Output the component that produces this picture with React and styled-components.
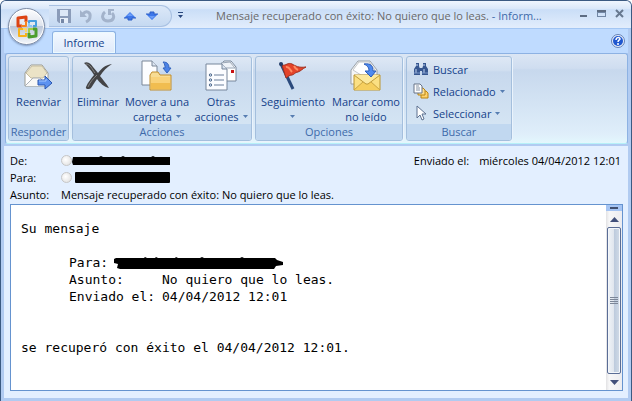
import React from "react";
import styled, { createGlobalStyle } from "styled-components";

const COLOR = {
  FRAME: "#3b5a82",
  SKY: "#bfdbff",
  PALE: "#e3efff",
  LINE: "#8db2e3",
  TEXT: "#15428b",
  LABEL: "#3e6aaa",
  FIELD: "#6593cf",
};

const SANS = '"Open Sans", "Noto Sans", sans-serif';
const MONO = '"DejaVu Sans Mono", "Liberation Mono", monospace';

const GlobalStyle = createGlobalStyle`
  * {
    box-sizing: border-box;
  }
  body {
    margin: 0;
    font-family: ${SANS};
    font-size: 11px;
    color: #000;
  }
  button {
    margin: 0;
    padding: 0;
    border: 0;
    background: none;
    font: inherit;
    color: inherit;
  }
  svg {
    display: block;
    flex: none;
  }
`;

/* ---------- icons ---------- */

const OfficeLogo = () => (
  <svg width="24" height="24" viewBox="0 0 24 24" fill="none" strokeLinejoin="round">
    <path d="M7 11H3V3l8-1v5" stroke="#dd4313" strokeWidth="3" />
    <path d="M11 6v5H6" stroke="#f5821f" strokeWidth="2" />
    <path d="M14 9V6h7v5h-3" stroke="#4a9fe0" strokeWidth="2" />
    <path d="M14 8v3h3" stroke="#8cc6f2" strokeWidth="2" />
    <path d="M8 14H4v7h7v-3" stroke="#f7b21b" strokeWidth="2" />
    <path d="M8 14h3v3" stroke="#fcd668" strokeWidth="2" />
    <path d="M18 14h3v7l-7 1v-4" stroke="#4c9e2f" strokeWidth="3" />
    <path d="M14 18v-4h4" stroke="#a3cd45" strokeWidth="2" />
  </svg>
);

const SaveIcon = () => (
  <svg width="16" height="16" viewBox="0 0 16 16">
    <path d="M1 1h14v14H3l-2-2z" fill="#8b9cb9" />
    <path d="M4 2h8v6H4z" fill="#dce7f6" />
    <path d="M4 10h8v5H4z" fill="#e6eef9" />
    <path d="M5 11h3v4H5z" fill="#7587a6" />
  </svg>
);

const UndoIcon = () => (
  <svg width="16" height="16" viewBox="0 0 16 16" fill="none">
    <path d="M5 6c3-4 8-2 7 3 0 3-2 4-4 5" stroke="#a3b3cb" strokeWidth="3" />
    <path d="M2 2v7h7z" fill="#a3b3cb" />
  </svg>
);

const RedoIcon = () => (
  <svg width="16" height="16" viewBox="0 0 16 16" fill="none">
    <path d="M5 4c-4 3-3 9 3 9s7-5 4-8" stroke="#a3b3cb" strokeWidth="3" />
    <path d="M8 1h6v2h-3v4H8z" fill="#a3b3cb" />
  </svg>
);

const NavArrow = ({ down }) => (
  <svg width="14" height="14" viewBox="0 0 14 14">
    <g transform={down ? "rotate(180 7 7)" : undefined}>
      <path d="M7 3l6 6H9v2H5V9H1z" fill="#3d77ea" />
      <path d="M1 9h4v2h4V9h4" fill="none" stroke="#2f5fc4" />
      <path d="M7 4l3 3H4z" fill="#6c9df8" />
    </g>
  </svg>
);

const MoreIcon = () => (
  <svg width="7" height="7" viewBox="0 0 7 7" fill="#28467c">
    <path d="M1 0h5v1H1zM1 3h5L3.500 6z" />
  </svg>
);

const HelpIcon = () => (
  <svg width="14" height="14" viewBox="0 0 14 14" fill="none">
    <circle cx="7" cy="7" r="6.500" fill="#e6eefb" stroke="#6580b4" />
    <circle cx="7" cy="7" r="5" fill="#1f57cf" />
    <path d="M5 6c0-3 4-3 4-1 0 1-2 1-2 3M7 9v2" stroke="#fff" strokeWidth="1.500" />
  </svg>
);

const ForwardIcon = () => (
  <svg width="32" height="32" viewBox="0 0 32 32">
    <path d="M2 14L8 6h11l6 8v13H2z" fill="#fff" stroke="#9c9c92" />
    <path d="M3 14l6-7h10l5 7-4 5H8z" fill="#ebe3c6" stroke="#c5bda0" />
    <path d="M2 27l8-8h7l8 8" fill="#f8f8f6" stroke="#aab0b8" />
    <path d="M15 21h7v-4l7 7-7 6v-4h-7z" fill="#5d92f0" stroke="#2b57b0" />
    <path d="M16 22h7v-2" fill="none" stroke="#a4c7ff" />
  </svg>
);

const DeleteIcon = () => (
  <svg width="32" height="32" viewBox="0 0 32 32">
    <path d="M2 4c4-2 7 1 9 4l5 6c4-5 7-8 14-9-5 3-9 7-12 12 3 4 6 7 9 12-5-1-9-5-12-9-3 4-4 6-6 9-2 2-6 1-5-1 2-5 5-8 8-12C9 11 6 8 2 4z" fill="#444446" />
    <path d="M4 5c4 0 6 5 9 9M6 28c2-5 5-8 9-12" fill="none" stroke="#858585" />
  </svg>
);

const MoveIcon = () => (
  <svg width="32" height="32" viewBox="0 0 32 32">
    <path d="M1 2h10l5 5v19H1z" fill="#fcfdff" stroke="#7b8798" />
    <path d="M11 2v5h5" fill="#dce5f1" stroke="#7b8798" />
    <path d="M9 16l2-3h6l2 3h11v15H9z" fill="#f8dc93" stroke="#c18d2c" />
    <path d="M10 18h19v12H10z" fill="#f9d27a" />
    <path d="M10 24h19v6H10z" fill="#f1bd50" />
    <path d="M22 3c5 0 6 3 6 6h2l-4 5-4-5h2c0-2 0-4-2-6z" fill="#4b82e6" stroke="#3264be" />
  </svg>
);

const OtherIcon = () => (
  <svg width="32" height="32" viewBox="0 0 32 32">
    <path d="M15 7l4-5h7l5 6v14H15z" fill="#fff" stroke="#77869b" />
    <path d="M16 4l5 5h9l-5-6z" fill="#eef2f8" stroke="#9aa6b6" />
    <path d="M26 11h3v3h-3z" fill="#c91313" />
    <path d="M1 5h16l5 5v21H1z" fill="#fbfcff" stroke="#77869b" />
    <path d="M17 5v5h5" fill="#dbe4f0" stroke="#77869b" />
    <path d="M9 16h10M9 21h10M9 26h10" stroke="#6b7f9b" />
    <g fill="#d6e6fb" stroke="#4c6586">
      <circle cx="5.500" cy="16" r="1.200" />
      <circle cx="5.500" cy="21" r="1.200" />
      <circle cx="5.500" cy="26" r="1.200" />
    </g>
  </svg>
);

const FlagIcon = () => (
  <svg width="32" height="32" viewBox="0 0 32 32">
    <path d="M4 5l12 25" stroke="#2b4a7c" strokeWidth="3" />
    <path d="M5 6c4 1 6-3 10-1s6 4 14 3c-4 2-5 4-8 5-3 0-4 3-6 3-3 0-4 2-6 3z" fill="#e4442a" stroke="#a3301e" />
    <path d="M9 8c3-1 4 3 6 5M17 7c1 2 2 3 4 4" fill="none" stroke="#ff8b61" strokeWidth="2" />
    <circle cx="4" cy="5" r="2" fill="#233d68" />
  </svg>
);

const UnreadIcon = () => (
  <svg width="32" height="32" viewBox="0 0 32 32">
    <path d="M1 11l7-9h12l7 9v14H1z" fill="#f5f6f6" stroke="#9aa1a8" />
    <path d="M3 11l6-8h10l6 8-8 5h-6z" fill="#fff" stroke="#c5c8ca" />
    <path d="M4 16h26v15H4z" fill="#fbe083" stroke="#bc9630" />
    <path d="M4 31l10-9h6l10 9" fill="#f6cf5e" stroke="#cba544" />
    <path d="M4 16l12 9h2l12-9" fill="#fce99e" stroke="#c09b38" />
    <path d="M14 5c7-1 9 2 9 7h3l-5 6-6-6h4c0-3-1-5-5-7z" fill="#4f8aef" stroke="#2a5cb8" />
  </svg>
);

const FindIcon = () => (
  <svg width="16" height="16" viewBox="0 0 16 16" fill="#36568f">
    <path d="M3 2h3v3l1 3v6H1V8l2-3zM10 2h3v3l2 3v6H9V8l1-3zM6 7h4v3H6z" />
    <path d="M4 3v2M3 8v4M11 3v2M11 8v4" stroke="#c2d5f3" />
    <path d="M1 12h6M9 12h6" stroke="#7a97c8" />
  </svg>
);

const RelatedIcon = () => (
  <svg width="16" height="16" viewBox="0 0 16 16">
    <path d="M8 8h5l2 2v5H8z" fill="#ffd26a" stroke="#b98413" />
    <path d="M5 5h5l2 2v5H5z" fill="#ffdf8e" stroke="#b98413" />
    <path d="M1 1h6l2 2v7H1z" fill="#fff" stroke="#667387" />
    <path d="M3 3h3M3 5h4M3 7h4" stroke="#8492a5" />
  </svg>
);

const PointerIcon = () => (
  <svg width="16" height="16" viewBox="0 0 16 16">
    <path d="M4 1v12l3-3 2 5 2-1-2-5h4z" fill="#fff" stroke="#5d7190" />
  </svg>
);

const Caret = () => (
  <svg width="5" height="3" viewBox="0 0 5 3">
    <path d="M0 0h5L2.500 3z" fill="#567db1" />
  </svg>
);

const MinimizeIcon = () => (
  <svg width="9" height="9" viewBox="0 0 9 9">
    <path d="M1 6h7v2H1z" fill="#5e6d83" />
  </svg>
);

const MaximizeIcon = () => (
  <svg width="9" height="9" viewBox="0 0 9 9">
    <path d="M0 1h9v7H0zM1 4v3h7V4z" fill="#7287a5" fillRule="evenodd" />
    <path d="M0 1h9v2H0z" fill="#5e6d83" />
  </svg>
);

const CloseIcon = () => (
  <svg width="9" height="9" viewBox="0 0 9 9">
    <path d="M1 1l7 7M8 1L1 8" stroke="#67788f" strokeWidth="2" />
  </svg>
);

const ScrollArrow = ({ down }) => (
  <svg width="9" height="5" viewBox="0 0 9 5">
    <path d={down ? "M0 0h9L4.500 5z" : "M0 5h9L4.500 0z"} fill="#414f7a" />
  </svg>
);

const ScribbleShort = () => (
  <svg width="98" height="10" viewBox="0 0 98 10">
    <path d="M1 1h26l2-1 2 1h18l2-1 2 1h26l2-1 2 1h15v8H1L0 6z" />
  </svg>
);

const ScribbleBlock = () => (
  <svg width="95" height="11" viewBox="0 0 95 11">
    <rect width="95" height="11" rx="1" />
  </svg>
);

const ScribbleLong = () => (
  <svg width="170" height="13" viewBox="0 0 170 13">
    <path d="M0 3l2-1h28l1-1 2 1h8l1-1 2 1h17l1-1 2 1h22l2-1 2 1h36l2-1 2 1h31l2 2 6 2v3l-7 1-2 3H6l-3-1 1-4-4-1z" />
  </svg>
);

/* ---------- layout ---------- */

const Window = styled.div`
  position: relative;
  display: flex;
  flex-direction: column;
  min-height: 100vh;
  border-style: solid;
  border-width: 1px 1px 0;
  border-color: ${COLOR.FRAME};
  border-radius: 6px 6px 0 0;
  background: #b1cbf1;
  overflow: hidden;
`;

const TitleBar = styled.header`
  display: flex;
  align-items: center;
  height: 28px;
  padding: 2px 4px 0 48px;
  border-bottom: 1px solid #a3c6f3;
  background: linear-gradient(#f0f6fe, #d9e7f9 30%, #cadef7 32%, #e2edfc);
`;

const QuickAccess = styled.div`
  display: flex;
  align-items: center;
  gap: 6px;
  height: 22px;
  padding: 0 11px 0 7px;
  border: 1px solid #a9c1e2;
  border-left: 0;
  border-radius: 0 11px 11px 0;
  background: linear-gradient(#dce8f8, #c5d9f1);
`;

const ToolButton = styled.button`
  display: grid;
  place-items: center;
  width: 16px;
  height: 16px;
`;

const Title = styled.h1`
  flex: 1;
  min-width: 0;
  margin: 0 0 0 28px;
  overflow: hidden;
  font-size: 11px;
  font-weight: normal;
  line-height: 16px;
  white-space: nowrap;
  color: #3e6aaa;

  span {
    color: #696969;
  }
`;

const WindowButtons = styled.div`
  display: flex;
  gap: 2px;
  padding-bottom: 5px;
`;

const OfficeButton = styled.button`
  position: absolute;
  top: 7px;
  left: 7px;
  display: grid;
  place-items: center;
  width: 37px;
  height: 37px;
  border: 1px solid #7e8ca5;
  border-radius: 50%;
  background: linear-gradient(#fdfdfe, #dfe4ed 48%, #bcc7da 50%, #f4f7fb);
  box-shadow: inset 0 0 0 1px #fff, 0 1px 2px #7d96bd;
`;

const TabStrip = styled.nav`
  display: flex;
  align-items: flex-end;
  height: 24px;
  margin: 0 3px;
  padding: 0 3px 0 48px;
  background: ${COLOR.SKY};
`;

const Tab = styled.button`
  width: 64px;
  height: 22px;
  border: 1px solid ${COLOR.LINE};
  border-bottom: 0;
  border-radius: 3px 3px 0 0;
  background: linear-gradient(#f2f8ff, #dfeafa);
  box-shadow: inset 0 0 0 1px #ebf9ff;
  color: ${COLOR.TEXT};
`;

const HelpButton = styled.button`
  margin: 0 0 5px auto;
`;

const Ribbon = styled.section`
  display: flex;
  gap: 3px;
  height: 91px;
  margin: 0 3px 0 4px;
  padding: 2px;
  border: 1px solid ${COLOR.LINE};
  border-bottom-color: #b6f0f8;
  border-radius: 3px;
  background: linear-gradient(#dbe6f4, #cfddf0 16%, #c7d8ed 18%, #dfeefa 90%, #e3f7fd);
`;

const Group = styled.div`
  display: flex;
  flex-direction: column;
  border: 1px solid #a4bfdd;
  border-radius: 3px;
  background: linear-gradient(#dee8f5, #d1dff0 16%, #c7d8ed 18%, #d8e8f5);
  box-shadow: 1px 1px 0 #eaf3fc;
`;

const GroupItems = styled.div`
  flex: 1;
  display: flex;
  gap: 2px;
  padding: 2px 1px 0;
`;

const SmallItems = styled.div`
  flex: 1;
  display: flex;
  flex-direction: column;
  align-items: flex-start;
  padding: 1px 6px 0;
`;

const GroupLabel = styled.div`
  height: 16px;
  border-radius: 0 0 2px 2px;
  background: #c1d8f0;
  line-height: 16px;
  text-align: center;
  color: ${COLOR.LABEL};
`;

const LargeButton = styled.button`
  display: flex;
  flex-direction: column;
  align-items: center;
  gap: 3px;
  min-width: ${(props) => props.$width}px;
  line-height: 15px;
  white-space: nowrap;
  color: ${COLOR.TEXT};
`;

const ButtonLine = styled.span`
  display: flex;
  align-items: center;
  justify-content: center;
  gap: 4px;
  height: 15px;
`;

const SmallButton = styled.button`
  display: flex;
  align-items: center;
  gap: 4px;
  height: 22px;
  color: ${COLOR.TEXT};
`;

const Reading = styled.main`
  flex: 1;
  display: flex;
  flex-direction: column;
  margin: 2px 3px 3px;
  padding: 6px 5px 7px 6px;
  background: ${COLOR.PALE};
`;

const MessageHeader = styled.div`
  display: grid;
  grid-template-columns: 51px 1fr auto;
  grid-auto-rows: 17px;
  align-items: center;
  padding-right: 2px;
  margin-bottom: 1px;
`;

const Value = styled.div`
  display: flex;
  align-items: center;
  gap: ${(props) => props.$gap || 0}px;
`;

const Presence = styled.span`
  width: 11px;
  height: 11px;
  border: 1px solid #c6c6c6;
  border-radius: 50%;
  background: radial-gradient(circle at 40% 40%, #fff, #dcdcdc);
`;

const Sent = styled.div`
  display: flex;
  gap: 10px;
`;

const Pane = styled.div`
  flex: 1;
  display: flex;
  border: 1px solid ${COLOR.FIELD};
  background: #fff;
`;

const Message = styled.article`
  flex: 1;
  padding: 15px 10px;
  font-family: ${MONO};
  font-size: 13px;
  line-height: 17px;

  p {
    margin: 0;
  }
`;

const Details = styled.div`
  margin: 17px 0 34px 48px;
`;

const DetailRow = styled.div`
  display: grid;
  grid-template-columns: ${(props) => props.$label || 93}px 1fr;
  align-items: center;
  height: 17px;
  white-space: nowrap;
`;

const ScrollBar = styled.div`
  display: flex;
  flex-direction: column;
  width: 16px;
  background: linear-gradient(to right, #e2e2e4, #f7f7f8 20%, #ececf0);
`;

const Splitter = styled.div`
  display: grid;
  place-items: center;
  height: 6px;
  background: #a5c4f3;

  &::before {
    content: "";
    width: 8px;
    height: 2px;
    background: #414f6f;
  }
`;

const ScrollButton = styled.button`
  display: grid;
  place-items: center;
  height: 16px;
`;

const Thumb = styled.div`
  flex: 1;
  display: grid;
  place-items: center;
  margin: 0 1px;
  border: 1px solid #5a6d96;
  border-radius: 2px;
  background: linear-gradient(to right, #f0f4f8, #e0e6ee 48%, #bdcbdd 52%, #d2dce8);
  box-shadow: inset 0 0 0 1px #f4f7fb;
`;

const Grip = styled.span`
  width: 8px;
  height: 7px;
  background: repeating-linear-gradient(#7c8798 0 1px, transparent 1px 2px);
`;

function App() {
  return (
    <Window>
      <GlobalStyle />
      <TitleBar>
        <QuickAccess>
          <ToolButton aria-label="Guardar"><SaveIcon /></ToolButton>
          <ToolButton aria-label="Deshacer"><UndoIcon /></ToolButton>
          <ToolButton aria-label="Rehacer"><RedoIcon /></ToolButton>
          <ToolButton aria-label="Elemento anterior"><NavArrow /></ToolButton>
          <ToolButton aria-label="Elemento siguiente"><NavArrow down /></ToolButton>
        </QuickAccess>
        <ToolButton aria-label="Personalizar barra"><MoreIcon /></ToolButton>
        <Title>
          <span>Mensaje recuperado con éxito: No quiero que lo leas.</span> - Inform...
        </Title>
        <WindowButtons>
          <ToolButton aria-label="Minimizar"><MinimizeIcon /></ToolButton>
          <ToolButton aria-label="Maximizar"><MaximizeIcon /></ToolButton>
          <ToolButton aria-label="Cerrar"><CloseIcon /></ToolButton>
        </WindowButtons>
      </TitleBar>
      <OfficeButton aria-label="Botón de Office"><OfficeLogo /></OfficeButton>

      <TabStrip>
        <Tab>Informe</Tab>
        <HelpButton aria-label="Ayuda"><HelpIcon /></HelpButton>
      </TabStrip>

      <Ribbon>
        <Group>
          <GroupItems>
            <LargeButton $width={57}>
              <ForwardIcon />
              <ButtonLine>Reenviar</ButtonLine>
            </LargeButton>
          </GroupItems>
          <GroupLabel>Responder</GroupLabel>
        </Group>
        <Group>
          <GroupItems>
            <LargeButton $width={48}>
              <DeleteIcon />
              <ButtonLine>Eliminar</ButtonLine>
            </LargeButton>
            <LargeButton $width={66}>
              <MoveIcon />
              <span>
                <ButtonLine>Mover a una</ButtonLine>
                <ButtonLine>carpeta <Caret /></ButtonLine>
              </span>
            </LargeButton>
            <LargeButton $width={58}>
              <OtherIcon />
              <span>
                <ButtonLine>Otras</ButtonLine>
                <ButtonLine>acciones <Caret /></ButtonLine>
              </span>
            </LargeButton>
          </GroupItems>
          <GroupLabel>Acciones</GroupLabel>
        </Group>
        <Group>
          <GroupItems>
            <LargeButton $width={72}>
              <FlagIcon />
              <span>
                <ButtonLine>Seguimiento</ButtonLine>
                <ButtonLine><Caret /></ButtonLine>
              </span>
            </LargeButton>
            <LargeButton $width={70}>
              <UnreadIcon />
              <span>
                <ButtonLine>Marcar como</ButtonLine>
                <ButtonLine>no leído</ButtonLine>
              </span>
            </LargeButton>
          </GroupItems>
          <GroupLabel>Opciones</GroupLabel>
        </Group>
        <Group>
          <SmallItems>
            <SmallButton><FindIcon />Buscar</SmallButton>
            <SmallButton><RelatedIcon />Relacionado <Caret /></SmallButton>
            <SmallButton><PointerIcon />Seleccionar <Caret /></SmallButton>
          </SmallItems>
          <GroupLabel>Buscar</GroupLabel>
        </Group>
      </Ribbon>

      <Reading>
        <MessageHeader>
          <span>De:</span>
          <Value><Presence /><ScribbleShort /></Value>
          <Sent>
            <span>Enviado el:</span>
            <span>miércoles 04/04/2012 12:01</span>
          </Sent>
          <span>Para:</span>
          <Value $gap={3}><Presence /><ScribbleBlock /></Value>
          <span />
          <span>Asunto:</span>
          <Value>Mensaje recuperado con éxito: No quiero que lo leas.</Value>
        </MessageHeader>
        <Pane>
          <Message>
            <p>Su mensaje</p>
            <Details>
              <DetailRow $label={45}>
                <span>Para:</span>
                <ScribbleLong />
              </DetailRow>
              <DetailRow>
                <span>Asunto:</span>
                <span>No quiero que lo leas.</span>
              </DetailRow>
              <DetailRow>
                <span>Enviado el:</span>
                <span>04/04/2012 12:01</span>
              </DetailRow>
            </Details>
            <p>se recuperó con éxito el 04/04/2012 12:01.</p>
          </Message>
          <ScrollBar>
            <Splitter />
            <ScrollButton aria-label="Subir"><ScrollArrow /></ScrollButton>
            <Thumb><Grip /></Thumb>
            <ScrollButton aria-label="Bajar"><ScrollArrow down /></ScrollButton>
          </ScrollBar>
        </Pane>
      </Reading>
    </Window>
  );
}

export default App;
